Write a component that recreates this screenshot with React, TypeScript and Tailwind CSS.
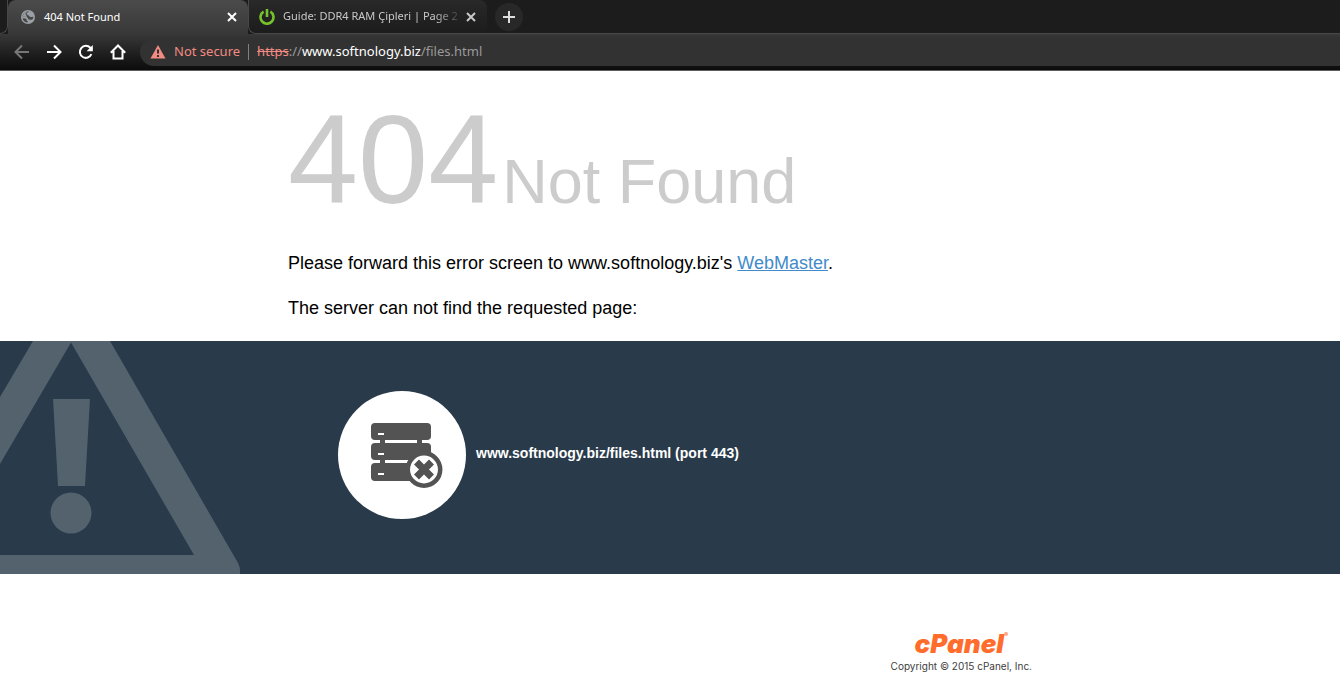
import type { ReactNode } from 'react';

// ============= Browser chrome =============

function CloseIcon() {
  return (
    <svg width="16" height="16" viewBox="0 0 16 16" stroke="currentColor" strokeWidth="2" fill="none">
      <path d="M4 4l8 8M12 4l-8 8" />
    </svg>
  );
}

function GlobeIcon() {
  return (
    <svg width="16" height="16" viewBox="0 0 16 16" className="shrink-0">
      <circle cx="8" cy="8" r="7" fill="#9aa0a6" />
      <path d="M9 2.500c-.3 1-2.400 1-2.400 2.300 0 1.200 1.400.9 2 1.700.7.9 1.200 1.500 2.300 1.500.9 0 1.500-.5 2.600-.3-.1 1.200-.6 2.200-1.400 3-.9-.2-2 .2-3.100-.2C7.800 10 7.900 8.700 6.700 8 5.700 7.500 4 7.600 2.500 7.600 2.700 4.700 5.300 2.300 9 2.500z" fill="#474747" />
      <path d="M2.600 9.500c1.400-.3 3-.2 3.700.6.7.8.1 1.700 1.200 2.200.6.300.5.700.4 1.200-2.500 0-4.700-1.600-5.300-4z" fill="#474747" />
      <path d="M2.800 7.500C3 5 4.800 3.200 6.600 2.900c-.2 1-1.300 1.200-1.100 2.500.2 1 1.500 1.200 1.500 2.100-1.400.4-2.900.1-4.200 0z" fill="#9aa0a6" />
    </svg>
  );
}

function PowerIcon() {
  return (
    <svg width="16" height="16" viewBox="0 0 16 16" fill="none" stroke="#76c22b" strokeWidth="2.600" className="shrink-0">
      <path d="M4.600 2.700a6.500 6.500 0 1 0 6.800 0M8 0v8" />
    </svg>
  );
}

function NavButton({ label, children, dim }: { label: string; children: ReactNode; dim?: boolean }) {
  return (
    <button aria-label={label} className={`flex size-6 items-center justify-center ${dim ? 'text-[#777777]' : 'text-white'}`}>
      <svg width="16" height="16" viewBox="0 0 16 16" fill="none" stroke="currentColor" strokeWidth="2">
        {children}
      </svg>
    </button>
  );
}

function TabStrip() {
  return (
    <div className="flex h-[34px] bg-[#1c1c1c] text-[11px]">
      <div className="w-2 rounded-br-lg border-r border-b border-[#484848]" />
      <div className="flex w-60 items-center rounded-t-lg bg-linear-to-b from-[#4b4b4b] to-[#383838] pr-2 pl-3 text-white">
        <GlobeIcon />
        <span className="flex-1 pl-2">404 Not Found</span>
        <button aria-label="Close tab">
          <CloseIcon />
        </button>
      </div>
      <div className="flex w-[239px] items-center rounded-bl-lg rounded-tr-lg border-b border-l border-[#484848] bg-linear-to-b from-[#292929] to-[#1c1c1c] pr-2 pl-[10px] text-[#c8c8c8]">
        <PowerIcon />
        <span className="flex-1 overflow-hidden pl-2 whitespace-nowrap mask-r-from-85%">
          Guide: DDR4 RAM Çipleri | Page 2
        </span>
        <button aria-label="Close tab">
          <CloseIcon />
        </button>
      </div>
      <div className="flex flex-1 items-center border-b border-[#484848] pl-2">
        <button aria-label="New tab" className="flex size-7 items-center justify-center rounded-full bg-[#282828] text-[#dddddd]">
          <svg width="14" height="14" viewBox="0 0 14 14" stroke="currentColor" strokeWidth="2">
            <path d="M7 1v12M1 7h12" />
          </svg>
        </button>
      </div>
    </div>
  );
}

function Toolbar() {
  return (
    <div className="flex h-[37px] items-start gap-[10px] border-b border-[#5c5c5c] bg-linear-to-b from-[#383838] to-[#0c0c0c] pt-1 pl-[10px]">
      <div className="flex h-7 items-center gap-2">
        <NavButton label="Back" dim>
          <path d="M15 8H2M8 1.500L1.500 8 8 14.500" />
        </NavButton>
        <NavButton label="Forward">
          <path d="M1 8h13M8 1.500L14.500 8 8 14.500" />
        </NavButton>
        <NavButton label="Reload">
          <path d="M13.400 10.200A6 6 0 1 1 12.300 3.800L14 5.500" />
          <path d="M14.800 1v6.200H8.600z" fill="currentColor" stroke="none" />
        </NavButton>
        <NavButton label="Home">
          <path d="M.8 8.800L8 1.500l7.200 7.300M3.500 7v7.500h9V7" />
        </NavButton>
      </div>
      <div className="flex h-7 flex-1 items-center rounded-l-full bg-[#323232] pl-[10px] text-[13px] whitespace-nowrap">
        <svg width="16" height="16" viewBox="0 0 16 16">
          <path d="M8 1l7.500 13.500H.5z" fill="#f28b82" />
          <path d="M8 5.500v4M8 11v2" stroke="#323232" strokeWidth="2" />
        </svg>
        <span className="ml-2 text-[#f28b82]">Not secure</span>
        <span className="mx-2 h-4 w-px bg-[#808080]" />
        <span className="text-[#9a9a9a]">
          <s className="text-[#f28b82]">https</s>://<span className="text-white">www.softnology.biz</span>/files.html
        </span>
      </div>
    </div>
  );
}

// ============= Error page =============

function WarningTriangle() {
  return (
    <svg width="240" height="233" viewBox="0 0 240 233" fill="#54626e" className="absolute top-0 left-0">
      <path d="M33 0H110L238 222Q240 226 240 229V233H0V214H194L71 1.500 0 123V56z" />
      <path d="M53 58H90L85 145H58z" />
      <circle cx="71" cy="172" r="20.500" />
    </svg>
  );
}

function ServerIcon() {
  return (
    <svg width="128" height="128" viewBox="0 0 128 128" className="shrink-0">
      <circle cx="64" cy="64" r="64" fill="#fff" />
      <g fill="#535353">
        <rect x="33" y="32" width="60" height="17" rx="4" />
        <rect x="33" y="52" width="60" height="17" rx="4" />
        <rect x="33" y="72" width="60" height="18" rx="4" />
        <path d="M42 48h5v26h-5zM79 48h5v26h-5z" />
      </g>
      <path d="M40 43h6M40 63h6M40 83h6" stroke="#fff" strokeWidth="2" />
      <circle cx="86" cy="78.500" r="16.200" fill="#fff" stroke="#535353" strokeWidth="4.500" />
      <path d="M78.500 71l15 15M93.500 71l-15 15" stroke="#535353" strokeWidth="7" />
    </svg>
  );
}

function Container({ children }: { children: ReactNode }) {
  return <div className="mx-[20%] pr-10 pl-5">{children}</div>;
}

export default function App() {
  return (
    <div className="min-h-screen bg-white font-['Liberation_Sans',Arial,sans-serif] text-black">
      <header className="font-['Noto_Sans',sans-serif]">
        <TabStrip />
        <Toolbar />
      </header>

      <main>
        <Container>
          <h1 className="pt-[37px] leading-[104px] whitespace-nowrap text-[#cccccc]">
            <span className="text-[126px]">404</span>
            <span className="ml-1 text-[63px]">Not Found</span>
          </h1>
          <section className="pt-px pb-5 text-lg leading-[25px]">
            <p>
              Please forward this error screen to www.softnology.biz's{' '}
              <a href="mailto:webmaster@softnology.biz" className="text-[#428bca] underline">
                WebMaster
              </a>
              .
            </p>
            <p className="mt-5">The server can not find the requested page:</p>
          </section>
        </Container>

        <section className="relative bg-[#293a4a] text-white">
          <WarningTriangle />
          <Container>
            <div className="relative flex items-center gap-[10px] pt-[50px] pb-[55px] pl-[50px]">
              <ServerIcon />
              <p className="pb-1 text-sm font-bold">www.softnology.biz/files.html (port 443)</p>
            </div>
          </Container>
        </section>
      </main>

      <footer className="pt-[58px]">
        <Container>
          <div className="flex justify-end">
            <a href="#cpanel" className="flex flex-col items-center font-['Inter',sans-serif] text-[10px] leading-3 text-[#404040]">
              <span className="flex text-[26px] leading-6 font-black text-[#ff6c2c] italic">
                cPanel<sup className="text-[6px] leading-3">®</sup>
              </span>
              <span className="mt-1">Copyright © 2015 cPanel, Inc.</span>
            </a>
          </div>
        </Container>
      </footer>
    </div>
  );
}
